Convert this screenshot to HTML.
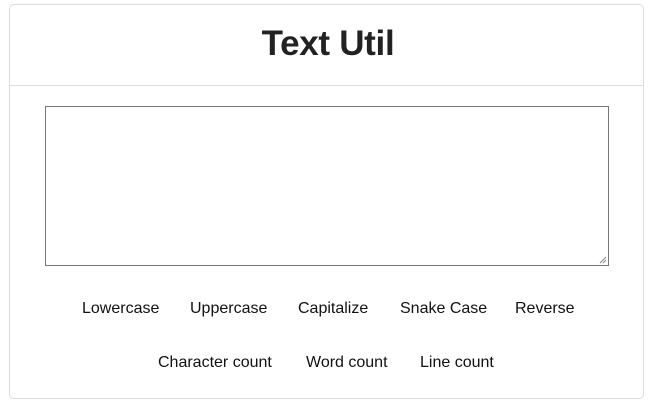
<!DOCTYPE html>
<html><head><style>
body{margin:0;background:#fff;font-family:"Liberation Sans",Arial,sans-serif;width:656px;height:408px;position:relative;overflow:hidden}
.card{position:absolute;left:9px;top:4px;width:635px;height:395px;border:1px solid #dcdcdc;border-radius:5px;box-sizing:border-box}
.hd{position:absolute;left:10px;top:85px;width:634px;height:1px;background:#dcdcdc}
h1{position:absolute;left:0;width:656px;top:22px;margin:0;text-align:center;font-size:35px;font-weight:bold;color:#222;line-height:44px;letter-spacing:-0.3px}
.ta{position:absolute;left:45px;top:106px;width:564px;height:160px;border:1px solid #767676;box-sizing:border-box}
.b{position:absolute;font-size:16px;color:#111;line-height:20px}
</style></head><body>
<div class="card"></div><div class="hd"></div>
<h1>Text Util</h1>
<div class="ta"></div>
<svg style="position:absolute;left:599px;top:256px" width="8" height="8"><path d="M7 1L1 7M7 4L4 7" stroke="#888" stroke-width="1"/></svg>
<span class="b" style="left:82px;top:299px">Lowercase</span>
<span class="b" style="left:190px;top:299px">Uppercase</span>
<span class="b" style="left:298px;top:299px">Capitalize</span>
<span class="b" style="left:400px;top:299px">Snake Case</span>
<span class="b" style="left:515px;top:299px">Reverse</span>
<span class="b" style="left:158px;top:353px">Character count</span>
<span class="b" style="left:306px;top:353px">Word count</span>
<span class="b" style="left:420px;top:353px">Line count</span>
</body></html>
